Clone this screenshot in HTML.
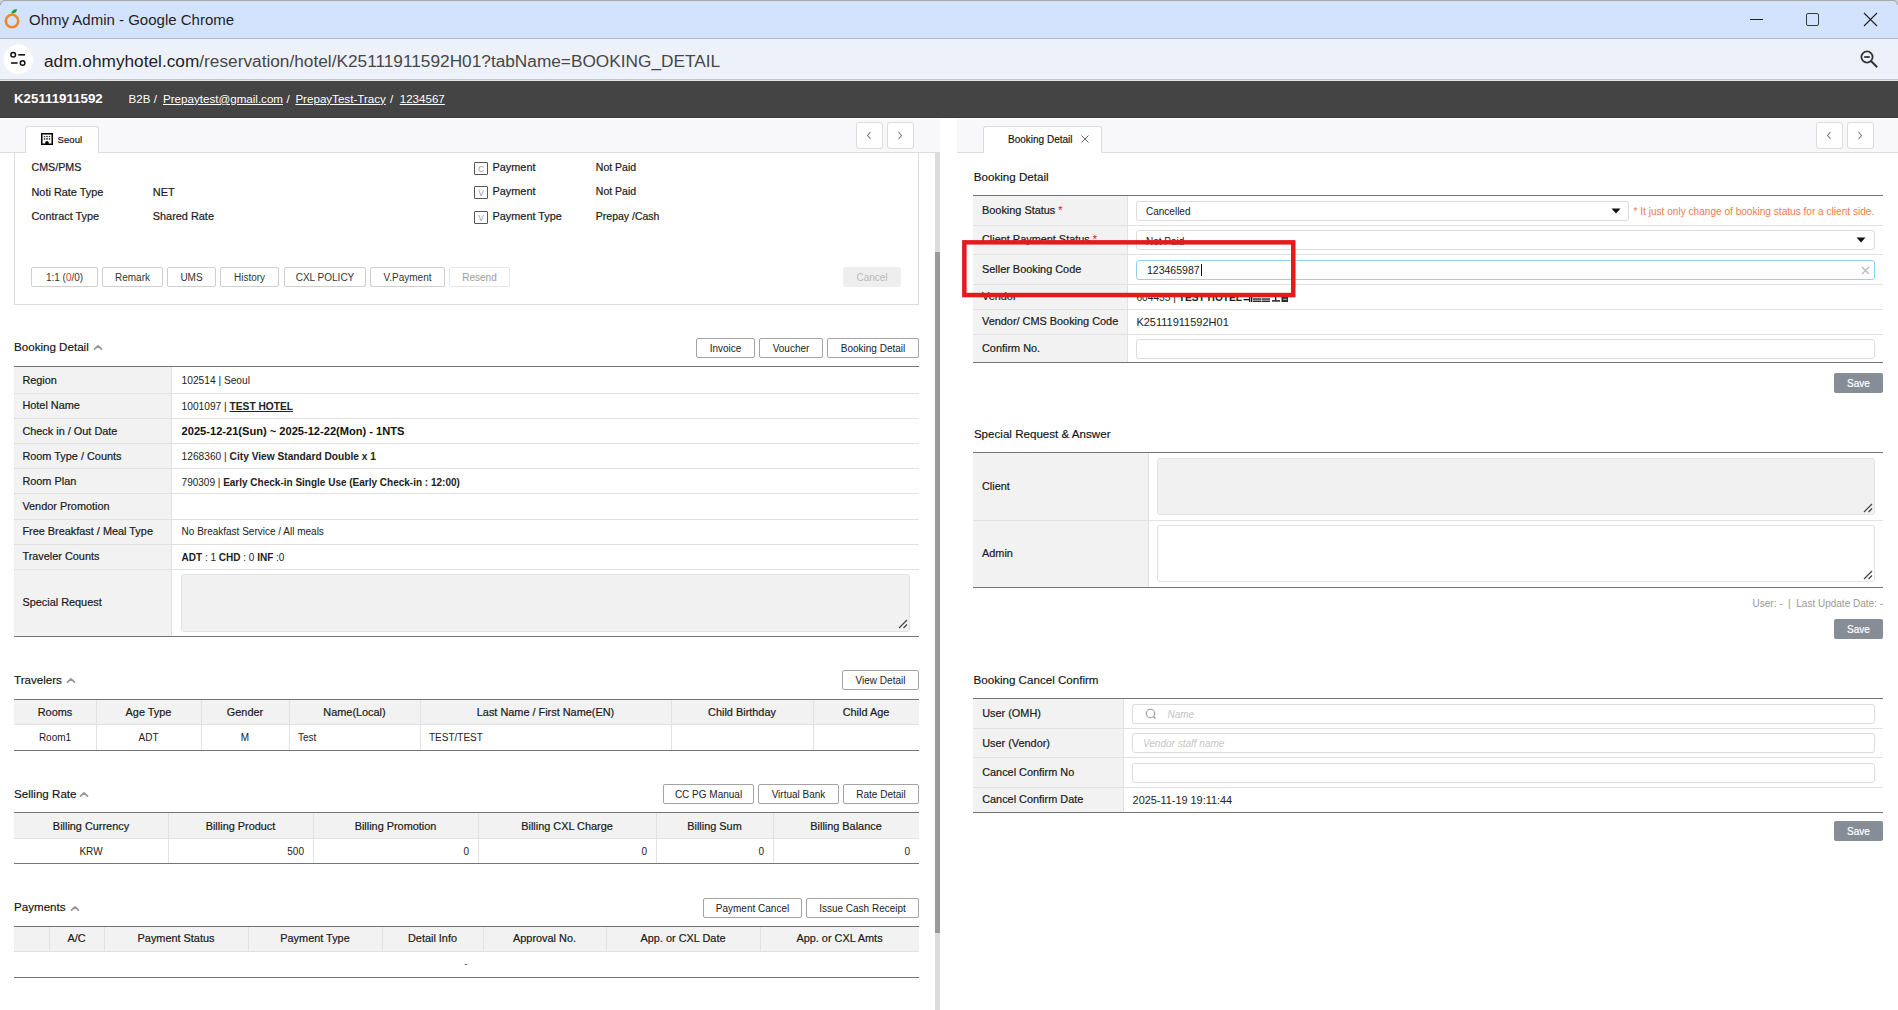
<!DOCTYPE html>
<html><head><meta charset="utf-8"><title>Ohmy Admin</title>
<style>
html,body{margin:0;padding:0;}
body{width:1898px;height:1010px;position:relative;overflow:hidden;background:#fff;font-family:"Liberation Sans",sans-serif;}
.a{position:absolute;}
.t{position:absolute;white-space:nowrap;}
</style></head><body>
<div class="a" style="left:0px;top:0px;width:1898px;height:38px;background:#d3e3fd"></div>
<div class="a" style="left:0px;top:0px;width:1898px;height:1px;background:#a5a7aa"></div>
<svg class="a" style="left:0;top:0" width="5" height="5"><path d="M0 0 H5 V1 C2.5 1 1 2.5 1 5 H0 Z" fill="#d2d4d8"/><path d="M5 0.5 C2.3 0.5 0.5 2.3 0.5 5" fill="none" stroke="#9a9ca0" stroke-width="1"/></svg>
<svg class="a" style="left:1893px;top:0" width="5" height="5"><path d="M5 0 H0 V1 C2.5 1 4 2.5 4 5 H5 Z" fill="#d2d4d8"/><path d="M0 0.5 C2.7 0.5 4.5 2.3 4.5 5" fill="none" stroke="#9a9ca0" stroke-width="1"/></svg>
<div class="a" style="left:0px;top:38px;width:1898px;height:1px;background:#b4b8bf"></div>
<div class="a" style="left:0px;top:39px;width:1898px;height:40px;background:#edf1f9"></div>
<div class="a" style="left:0px;top:79px;width:1898px;height:1px;background:#c3c5c9"></div>
<div class="a" style="left:0px;top:80px;width:1898px;height:1px;background:#e6e6e6"></div>
<svg class="a" style="left:3px;top:7px" width="20" height="22" viewBox="0 0 20 22"><circle cx="9" cy="14" r="6.2" fill="none" stroke="#f0882b" stroke-width="2.6"/><path d="M8.4 6.6 C8.6 3.6 10.8 1.8 14 2.2 C13.8 5.2 11.6 6.8 8.4 6.6 Z" fill="#1a9b3f"/></svg>
<div class="t" style="left:29px;top:12.0px;font-size:15px;line-height:15px;font-weight:400;color:#1f1f1f;">Ohmy Admin - Google Chrome</div>
<div class="a" style="left:1750px;top:19px;width:13px;height:1px;background:#1f1f1f"></div>
<div class="a" style="left:1806px;top:13px;width:13px;height:13px;box-sizing:border-box;border:1.2px solid #3a3a3a;border-radius:2px"></div>
<svg class="a" style="left:1863px;top:12px" width="15" height="15" viewBox="0 0 15 15"><path d="M1 1 L14 14 M14 1 L1 14" stroke="#1f1f1f" stroke-width="1.1"/></svg>
<svg class="a" style="left:2px;top:44px" width="32" height="32" viewBox="0 0 32 32"><circle cx="16.2" cy="15.4" r="14.8" fill="#fff"/><circle cx="11.2" cy="10.8" r="2.3" fill="none" stroke="#111" stroke-width="1.5"/><path d="M16.3 10.8 H23" stroke="#111" stroke-width="1.6"/><circle cx="20.6" cy="19" r="2.3" fill="none" stroke="#111" stroke-width="1.5"/><path d="M9 19 H15.6" stroke="#111" stroke-width="1.6"/></svg>
<div class="t" style="left:44px;top:52.7px;font-size:17.25px;line-height:17.25px;color:#474747"><span style="color:#1f1f1f">adm.ohmyhotel.com</span>/reservation/hotel/K25111911592H01?tabName=BOOKING_DETAIL</div>
<svg class="a" style="left:1858px;top:49px" width="22" height="22" viewBox="0 0 22 22"><circle cx="9" cy="8" r="5.6" fill="none" stroke="#333" stroke-width="1.8"/><path d="M6.2 8 H11.8" stroke="#333" stroke-width="1.8"/><path d="M13 12 L19.2 18.2" stroke="#333" stroke-width="2"/></svg>
<div class="a" style="left:0px;top:81px;width:1898px;height:37px;background:#444"></div>
<div class="a" style="left:0px;top:117px;width:1898px;height:1px;background:#3b3b3b"></div>
<div class="t" style="left:14px;top:92.24px;font-size:13.3px;line-height:13.3px;font-weight:700;color:#fff;">K25111911592</div>
<div class="t" style="left:128.5px;top:92.88px;font-size:11.6px;line-height:11.6px;font-weight:400;color:#fff;">B2B /</div>
<div class="t" style="left:163px;top:92.88px;font-size:11.6px;line-height:11.6px;font-weight:400;color:#fff;text-decoration:underline">Prepaytest@gmail.com</div>
<div class="t" style="left:286.5px;top:92.88px;font-size:11.6px;line-height:11.6px;font-weight:400;color:#fff;">/</div>
<div class="t" style="left:295.4px;top:92.88px;font-size:11.6px;line-height:11.6px;font-weight:400;color:#fff;text-decoration:underline">PrepayTest-Tracy</div>
<div class="t" style="left:390px;top:92.88px;font-size:11.6px;line-height:11.6px;font-weight:400;color:#fff;">/</div>
<div class="t" style="left:399.7px;top:92.88px;font-size:11.6px;line-height:11.6px;font-weight:400;color:#fff;text-decoration:underline">1234567</div>
<div class="a" style="left:0px;top:119px;width:940px;height:34px;background:#f8f7fa"></div>
<div class="a" style="left:0px;top:152px;width:940px;height:1px;background:#dedde0"></div>
<div class="a" style="left:25px;top:126px;width:74px;height:27px;box-sizing:border-box;background:#fff;border:1px solid #dcdcdc;border-bottom:none;border-radius:3px 3px 0 0"></div>
<svg class="a" style="left:41px;top:133px" width="12" height="12" viewBox="0 0 12 12"><rect x="0.75" y="0.75" width="10.5" height="10.5" fill="#fff" stroke="#000" stroke-width="1.5"/><g fill="#333"><rect x="2.8" y="2.9" width="1.4" height="1.3"/><rect x="5.2" y="2.9" width="1.6" height="1.3"/><rect x="7.8" y="2.9" width="1.4" height="1.3"/><rect x="2.8" y="5.1" width="1.4" height="1.6"/><rect x="5.2" y="5.1" width="1.6" height="1.6"/><rect x="7.8" y="5.1" width="1.4" height="1.6"/></g><path d="M4.3 11.5 V9.6 A1.7 1.7 0 0 1 7.7 9.6 V11.5 Z" fill="#000"/></svg>
<div class="t" style="left:57.6px;top:134.67px;font-size:9.6px;line-height:9.6px;font-weight:400;color:#111;-webkit-text-stroke:0.15px #111">Seoul</div>
<div class="a" style="left:856px;top:122px;width:27px;height:27px;box-sizing:border-box;background:#fff;border:1px solid #dcdcdc;border-radius:3px"></div>
<div class="a" style="left:887px;top:122px;width:27px;height:27px;box-sizing:border-box;background:#fff;border:1px solid #dcdcdc;border-radius:3px"></div>
<svg class="a" style="left:865px;top:131px" width="8" height="9" viewBox="0 0 8 9"><path d="M5.5 1 L2.5 4.5 L5.5 8" fill="none" stroke="#777" stroke-width="1.1"/></svg>
<svg class="a" style="left:896px;top:131px" width="8" height="9" viewBox="0 0 8 9"><path d="M2.5 1 L5.5 4.5 L2.5 8" fill="none" stroke="#777" stroke-width="1.1"/></svg>
<div class="a" style="left:14px;top:153px;width:1px;height:152px;background:#dcdcdc"></div>
<div class="a" style="left:918px;top:153px;width:1px;height:152px;background:#dcdcdc"></div>
<div class="a" style="left:14px;top:304px;width:905px;height:1px;background:#dcdcdc"></div>
<div class="t" style="left:31.5px;top:162.44px;font-size:10.7px;line-height:10.7px;font-weight:400;color:#1a1a1a;-webkit-text-stroke:0.2px #1a1a1a;">CMS/PMS</div>
<div class="t" style="left:31.5px;top:187.07px;font-size:10.9px;line-height:10.9px;font-weight:400;color:#1a1a1a;-webkit-text-stroke:0.2px #1a1a1a;">Noti Rate Type</div>
<div class="t" style="left:152.8px;top:187.07px;font-size:10.9px;line-height:10.9px;font-weight:400;color:#1a1a1a;-webkit-text-stroke:0.2px #1a1a1a;">NET</div>
<div class="t" style="left:31.5px;top:211.27px;font-size:10.9px;line-height:10.9px;font-weight:400;color:#1a1a1a;-webkit-text-stroke:0.2px #1a1a1a;">Contract Type</div>
<div class="t" style="left:152.8px;top:211.27px;font-size:10.9px;line-height:10.9px;font-weight:400;color:#1a1a1a;-webkit-text-stroke:0.2px #1a1a1a;">Shared Rate</div>
<div class="a" style="left:474px;top:162px;width:14px;height:13px;box-sizing:border-box;border:1px solid #555;border-radius:1px;background:#fff"></div>
<div class="t" style="left:481px;transform:translateX(-50%);top:164.6px;font-size:8.5px;line-height:8.5px;font-weight:400;color:#999;">C</div>
<div class="t" style="left:492.5px;top:162.17px;font-size:10.9px;line-height:10.9px;font-weight:400;color:#1a1a1a;-webkit-text-stroke:0.2px #1a1a1a;">Payment</div>
<div class="t" style="left:595.8px;top:162.01px;font-size:10.5px;line-height:10.5px;font-weight:400;color:#1a1a1a;-webkit-text-stroke:0.2px #1a1a1a;">Not Paid</div>
<div class="a" style="left:474px;top:186px;width:14px;height:13px;box-sizing:border-box;border:1px solid #555;border-radius:1px;background:#fff"></div>
<div class="t" style="left:481px;transform:translateX(-50%);top:188.6px;font-size:8.5px;line-height:8.5px;font-weight:400;color:#999;">V</div>
<div class="t" style="left:492.5px;top:186.17px;font-size:10.9px;line-height:10.9px;font-weight:400;color:#1a1a1a;-webkit-text-stroke:0.2px #1a1a1a;">Payment</div>
<div class="t" style="left:595.8px;top:186.01px;font-size:10.5px;line-height:10.5px;font-weight:400;color:#1a1a1a;-webkit-text-stroke:0.2px #1a1a1a;">Not Paid</div>
<div class="a" style="left:474px;top:211px;width:14px;height:13px;box-sizing:border-box;border:1px solid #555;border-radius:1px;background:#fff"></div>
<div class="t" style="left:481px;transform:translateX(-50%);top:213.6px;font-size:8.5px;line-height:8.5px;font-weight:400;color:#999;">V</div>
<div class="t" style="left:492.5px;top:211.17px;font-size:10.9px;line-height:10.9px;font-weight:400;color:#1a1a1a;-webkit-text-stroke:0.2px #1a1a1a;">Payment Type</div>
<div class="t" style="left:595.8px;top:211.01px;font-size:10.5px;line-height:10.5px;font-weight:400;color:#1a1a1a;-webkit-text-stroke:0.2px #1a1a1a;">Prepay /Cash</div>
<div class="a" style="left:31px;top:267px;width:67px;height:20px;box-sizing:border-box;border:1px solid #cfcfcf;border-radius:2px;background:#fff"></div>
<div class="t" style="left:64.5px;transform:translateX(-50%);top:273.04px;font-size:10px;line-height:10px;font-weight:400;color:#333;">1:1 (<span style="color:#e8322e">0</span>/0)</div>
<div class="a" style="left:102px;top:267px;width:61px;height:20px;box-sizing:border-box;border:1px solid #cfcfcf;border-radius:2px;background:#fff"></div>
<div class="t" style="left:132.5px;transform:translateX(-50%);top:273.04px;font-size:10px;line-height:10px;font-weight:400;color:#333;">Remark</div>
<div class="a" style="left:167px;top:267px;width:49px;height:20px;box-sizing:border-box;border:1px solid #cfcfcf;border-radius:2px;background:#fff"></div>
<div class="t" style="left:191.5px;transform:translateX(-50%);top:273.04px;font-size:10px;line-height:10px;font-weight:400;color:#333;">UMS</div>
<div class="a" style="left:220px;top:267px;width:59px;height:20px;box-sizing:border-box;border:1px solid #cfcfcf;border-radius:2px;background:#fff"></div>
<div class="t" style="left:249.5px;transform:translateX(-50%);top:273.04px;font-size:10px;line-height:10px;font-weight:400;color:#333;">History</div>
<div class="a" style="left:284px;top:267px;width:82px;height:20px;box-sizing:border-box;border:1px solid #cfcfcf;border-radius:2px;background:#fff"></div>
<div class="t" style="left:325.0px;transform:translateX(-50%);top:273.04px;font-size:10px;line-height:10px;font-weight:400;color:#333;">CXL POLICY</div>
<div class="a" style="left:370px;top:267px;width:75px;height:20px;box-sizing:border-box;border:1px solid #cfcfcf;border-radius:2px;background:#fff"></div>
<div class="t" style="left:407.5px;transform:translateX(-50%);top:273.04px;font-size:10px;line-height:10px;font-weight:400;color:#333;">V.Payment</div>
<div class="a" style="left:449px;top:267px;width:61px;height:20px;box-sizing:border-box;border:1px solid #e6e6e6;border-radius:2px;background:#fff"></div>
<div class="t" style="left:479.5px;transform:translateX(-50%);top:273.04px;font-size:10px;line-height:10px;font-weight:400;color:#9a9a9a;">Resend</div>
<div class="a" style="left:843px;top:267px;width:58px;height:20px;background:#eeeeee;border-radius:2px"></div>
<div class="t" style="left:872px;transform:translateX(-50%);top:273.04px;font-size:10px;line-height:10px;font-weight:400;color:#b9b9b9;">Cancel</div>
<div class="a" style="left:935px;top:153px;width:5px;height:857px;background:#dcdcdc"></div>
<div class="a" style="left:935px;top:252px;width:5px;height:681px;background:#999"></div>
<div class="t" style="left:14px;top:340.88px;font-size:11.6px;line-height:11.6px;font-weight:400;color:#111;-webkit-text-stroke:0.15px #111">Booking Detail</div>
<svg class="a" style="left:93px;top:344px" width="10" height="7" viewBox="0 0 10 7"><path d="M1.5 5.2 L5 1.8 L8.5 5.2" fill="none" stroke="#959595" stroke-width="1.7" stroke-linecap="round" stroke-linejoin="round"/></svg>
<div class="a" style="left:696px;top:338px;width:59px;height:20px;box-sizing:border-box;border:1px solid #a3a3a3;border-radius:2px;background:#fff"></div>
<div class="t" style="left:725.5px;transform:translateX(-50%);top:344.24px;font-size:10px;line-height:10px;font-weight:400;color:#222;">Invoice</div>
<div class="a" style="left:759px;top:338px;width:64px;height:20px;box-sizing:border-box;border:1px solid #a3a3a3;border-radius:2px;background:#fff"></div>
<div class="t" style="left:791.0px;transform:translateX(-50%);top:344.24px;font-size:10px;line-height:10px;font-weight:400;color:#222;">Voucher</div>
<div class="a" style="left:827px;top:338px;width:92px;height:20px;box-sizing:border-box;border:1px solid #a3a3a3;border-radius:2px;background:#fff"></div>
<div class="t" style="left:873.0px;transform:translateX(-50%);top:344.24px;font-size:10px;line-height:10px;font-weight:400;color:#222;">Booking Detail</div>
<div class="a" style="left:14px;top:366px;width:905px;height:1px;background:#747474"></div>
<div class="a" style="left:14px;top:367px;width:157px;height:269px;background:#f2f2f2"></div>
<div class="a" style="left:171px;top:367px;width:1px;height:269px;background:#e1e1e1"></div>
<div class="a" style="left:14px;top:393px;width:905px;height:1px;background:#e1e1e1"></div>
<div class="a" style="left:14px;top:418px;width:905px;height:1px;background:#e1e1e1"></div>
<div class="a" style="left:14px;top:443px;width:905px;height:1px;background:#e1e1e1"></div>
<div class="a" style="left:14px;top:468px;width:905px;height:1px;background:#e1e1e1"></div>
<div class="a" style="left:14px;top:493px;width:905px;height:1px;background:#e1e1e1"></div>
<div class="a" style="left:14px;top:519px;width:905px;height:1px;background:#e1e1e1"></div>
<div class="a" style="left:14px;top:544px;width:905px;height:1px;background:#e1e1e1"></div>
<div class="a" style="left:14px;top:569px;width:905px;height:1px;background:#e1e1e1"></div>
<div class="a" style="left:14px;top:636px;width:905px;height:1px;background:#747474"></div>
<div class="t" style="left:22.4px;top:374.77px;font-size:10.9px;line-height:10.9px;font-weight:400;color:#1a1a1a;-webkit-text-stroke:0.2px #1a1a1a;">Region</div>
<div class="t" style="left:22.4px;top:400.27px;font-size:10.9px;line-height:10.9px;font-weight:400;color:#1a1a1a;-webkit-text-stroke:0.2px #1a1a1a;">Hotel Name</div>
<div class="t" style="left:22.4px;top:425.57px;font-size:10.9px;line-height:10.9px;font-weight:400;color:#1a1a1a;-webkit-text-stroke:0.2px #1a1a1a;">Check in / Out Date</div>
<div class="t" style="left:22.4px;top:450.77px;font-size:10.9px;line-height:10.9px;font-weight:400;color:#1a1a1a;-webkit-text-stroke:0.2px #1a1a1a;">Room Type / Counts</div>
<div class="t" style="left:22.4px;top:475.97px;font-size:10.9px;line-height:10.9px;font-weight:400;color:#1a1a1a;-webkit-text-stroke:0.2px #1a1a1a;">Room Plan</div>
<div class="t" style="left:22.4px;top:501.27px;font-size:10.9px;line-height:10.9px;font-weight:400;color:#1a1a1a;-webkit-text-stroke:0.2px #1a1a1a;">Vendor Promotion</div>
<div class="t" style="left:22.4px;top:526.47px;font-size:10.9px;line-height:10.9px;font-weight:400;color:#1a1a1a;-webkit-text-stroke:0.2px #1a1a1a;">Free Breakfast / Meal Type</div>
<div class="t" style="left:22.4px;top:551.27px;font-size:10.9px;line-height:10.9px;font-weight:400;color:#1a1a1a;-webkit-text-stroke:0.2px #1a1a1a;">Traveler Counts</div>
<div class="t" style="left:22.4px;top:596.87px;font-size:10.9px;line-height:10.9px;font-weight:400;color:#1a1a1a;-webkit-text-stroke:0.2px #1a1a1a;">Special Request</div>
<div class="t" style="left:181.6px;top:376.17px;font-size:10.2px;line-height:10.2px;font-weight:400;color:#222;">102514 | Seoul</div>
<div class="t" style="left:181.6px;top:401.67px;font-size:10.2px;line-height:10.2px;font-weight:400;color:#222;">1001097 | <b style="text-decoration:underline">TEST HOTEL</b></div>
<div class="t" style="left:181.6px;top:426.1px;font-size:11.1px;line-height:11.1px;font-weight:700;color:#111;">2025-12-21(Sun) ~ 2025-12-22(Mon) - 1NTS</div>
<div class="t" style="left:181.6px;top:452.27px;font-size:10.2px;line-height:10.2px;font-weight:400;color:#222;">1268360 | <b>City View Standard Double x 1</b></div>
<div class="t" style="left:181.6px;top:477.74px;font-size:10px;line-height:10px;font-weight:400;color:#222;">790309 | <b>Early Check-in Single Use (Early Check-in : 12:00)</b></div>
<div class="t" style="left:181.6px;top:527.33px;font-size:10px;line-height:10px;font-weight:400;color:#222;">No Breakfast Service / All meals</div>
<div class="t" style="left:181.6px;top:552.63px;font-size:10px;line-height:10px;font-weight:400;color:#222;"><b>ADT</b> : 1 <b>CHD</b> : 0 <b>INF</b> :0</div>
<div class="a" style="left:181px;top:574px;width:729px;height:58px;box-sizing:border-box;background:#f1f1f1;border:1px solid #e3e3e3;border-radius:3px"></div>
<svg class="a" style="left:898px;top:619px" width="10" height="10" viewBox="0 0 10 10"><path d="M1 9 L9 1 M5.5 9 L9 5.5" stroke="#444" stroke-width="1.2"/></svg>
<div class="t" style="left:14px;top:673.88px;font-size:11.6px;line-height:11.6px;font-weight:400;color:#111;-webkit-text-stroke:0.15px #111">Travelers</div>
<svg class="a" style="left:66px;top:677px" width="10" height="7" viewBox="0 0 10 7"><path d="M1.5 5.2 L5 1.8 L8.5 5.2" fill="none" stroke="#959595" stroke-width="1.7" stroke-linecap="round" stroke-linejoin="round"/></svg>
<div class="a" style="left:842px;top:670px;width:77px;height:20px;box-sizing:border-box;border:1px solid #a3a3a3;border-radius:2px;background:#fff"></div>
<div class="t" style="left:880.5px;transform:translateX(-50%);top:676.24px;font-size:10px;line-height:10px;font-weight:400;color:#222;">View Detail</div>
<div class="a" style="left:14px;top:699px;width:905px;height:1px;background:#747474"></div>
<div class="a" style="left:14px;top:700px;width:905px;height:24px;background:#f2f2f2"></div>
<div class="a" style="left:14px;top:724px;width:905px;height:1px;background:#e1e1e1"></div>
<div class="a" style="left:96px;top:700px;width:1px;height:50px;background:#e1e1e1"></div>
<div class="a" style="left:201px;top:700px;width:1px;height:50px;background:#e1e1e1"></div>
<div class="a" style="left:289px;top:700px;width:1px;height:50px;background:#e1e1e1"></div>
<div class="a" style="left:420px;top:700px;width:1px;height:50px;background:#e1e1e1"></div>
<div class="a" style="left:671px;top:700px;width:1px;height:50px;background:#e1e1e1"></div>
<div class="a" style="left:813px;top:700px;width:1px;height:50px;background:#e1e1e1"></div>
<div class="a" style="left:14px;top:750px;width:905px;height:1px;background:#747474"></div>
<div class="t" style="left:55.0px;transform:translateX(-50%);top:706.57px;font-size:10.9px;line-height:10.9px;font-weight:400;color:#1a1a1a;-webkit-text-stroke:0.2px #1a1a1a;">Rooms</div>
<div class="t" style="left:148.5px;transform:translateX(-50%);top:706.57px;font-size:10.9px;line-height:10.9px;font-weight:400;color:#1a1a1a;-webkit-text-stroke:0.2px #1a1a1a;">Age Type</div>
<div class="t" style="left:245.0px;transform:translateX(-50%);top:706.57px;font-size:10.9px;line-height:10.9px;font-weight:400;color:#1a1a1a;-webkit-text-stroke:0.2px #1a1a1a;">Gender</div>
<div class="t" style="left:354.5px;transform:translateX(-50%);top:706.57px;font-size:10.9px;line-height:10.9px;font-weight:400;color:#1a1a1a;-webkit-text-stroke:0.2px #1a1a1a;">Name(Local)</div>
<div class="t" style="left:545.5px;transform:translateX(-50%);top:706.57px;font-size:10.9px;line-height:10.9px;font-weight:400;color:#1a1a1a;-webkit-text-stroke:0.2px #1a1a1a;">Last Name / First Name(EN)</div>
<div class="t" style="left:742.0px;transform:translateX(-50%);top:706.57px;font-size:10.9px;line-height:10.9px;font-weight:400;color:#1a1a1a;-webkit-text-stroke:0.2px #1a1a1a;">Child Birthday</div>
<div class="t" style="left:866.0px;transform:translateX(-50%);top:706.57px;font-size:10.9px;line-height:10.9px;font-weight:400;color:#1a1a1a;-webkit-text-stroke:0.2px #1a1a1a;">Child Age</div>
<div class="t" style="left:55.0px;transform:translateX(-50%);top:733.24px;font-size:10px;line-height:10px;font-weight:400;color:#222;">Room1</div>
<div class="t" style="left:148.5px;transform:translateX(-50%);top:733.24px;font-size:10px;line-height:10px;font-weight:400;color:#222;">ADT</div>
<div class="t" style="left:245.0px;transform:translateX(-50%);top:733.24px;font-size:10px;line-height:10px;font-weight:400;color:#222;">M</div>
<div class="t" style="left:298px;top:733.24px;font-size:10px;line-height:10px;font-weight:400;color:#222;">Test</div>
<div class="t" style="left:429px;top:733.24px;font-size:10px;line-height:10px;font-weight:400;color:#222;">TEST/TEST</div>
<div class="t" style="left:14px;top:787.68px;font-size:11.6px;line-height:11.6px;font-weight:400;color:#111;-webkit-text-stroke:0.15px #111">Selling Rate</div>
<svg class="a" style="left:79px;top:791px" width="10" height="7" viewBox="0 0 10 7"><path d="M1.5 5.2 L5 1.8 L8.5 5.2" fill="none" stroke="#959595" stroke-width="1.7" stroke-linecap="round" stroke-linejoin="round"/></svg>
<div class="a" style="left:663px;top:784px;width:91px;height:20px;box-sizing:border-box;border:1px solid #a3a3a3;border-radius:2px;background:#fff"></div>
<div class="t" style="left:708.5px;transform:translateX(-50%);top:790.24px;font-size:10px;line-height:10px;font-weight:400;color:#222;">CC PG Manual</div>
<div class="a" style="left:758px;top:784px;width:81px;height:20px;box-sizing:border-box;border:1px solid #a3a3a3;border-radius:2px;background:#fff"></div>
<div class="t" style="left:798.5px;transform:translateX(-50%);top:790.24px;font-size:10px;line-height:10px;font-weight:400;color:#222;">Virtual Bank</div>
<div class="a" style="left:843px;top:784px;width:76px;height:20px;box-sizing:border-box;border:1px solid #a3a3a3;border-radius:2px;background:#fff"></div>
<div class="t" style="left:881.0px;transform:translateX(-50%);top:790.24px;font-size:10px;line-height:10px;font-weight:400;color:#222;">Rate Detail</div>
<div class="a" style="left:14px;top:812px;width:905px;height:1px;background:#747474"></div>
<div class="a" style="left:14px;top:813px;width:905px;height:25px;background:#f2f2f2"></div>
<div class="a" style="left:14px;top:838px;width:905px;height:1px;background:#e1e1e1"></div>
<div class="a" style="left:168px;top:813px;width:1px;height:50px;background:#e1e1e1"></div>
<div class="a" style="left:313px;top:813px;width:1px;height:50px;background:#e1e1e1"></div>
<div class="a" style="left:478px;top:813px;width:1px;height:50px;background:#e1e1e1"></div>
<div class="a" style="left:656px;top:813px;width:1px;height:50px;background:#e1e1e1"></div>
<div class="a" style="left:773px;top:813px;width:1px;height:50px;background:#e1e1e1"></div>
<div class="a" style="left:14px;top:863px;width:905px;height:1px;background:#747474"></div>
<div class="t" style="left:91.0px;transform:translateX(-50%);top:820.67px;font-size:10.9px;line-height:10.9px;font-weight:400;color:#1a1a1a;-webkit-text-stroke:0.2px #1a1a1a;">Billing Currency</div>
<div class="t" style="left:240.5px;transform:translateX(-50%);top:820.67px;font-size:10.9px;line-height:10.9px;font-weight:400;color:#1a1a1a;-webkit-text-stroke:0.2px #1a1a1a;">Billing Product</div>
<div class="t" style="left:395.5px;transform:translateX(-50%);top:820.67px;font-size:10.9px;line-height:10.9px;font-weight:400;color:#1a1a1a;-webkit-text-stroke:0.2px #1a1a1a;">Billing Promotion</div>
<div class="t" style="left:567.0px;transform:translateX(-50%);top:820.67px;font-size:10.9px;line-height:10.9px;font-weight:400;color:#1a1a1a;-webkit-text-stroke:0.2px #1a1a1a;">Billing CXL Charge</div>
<div class="t" style="left:714.5px;transform:translateX(-50%);top:820.67px;font-size:10.9px;line-height:10.9px;font-weight:400;color:#1a1a1a;-webkit-text-stroke:0.2px #1a1a1a;">Billing Sum</div>
<div class="t" style="left:846.0px;transform:translateX(-50%);top:820.67px;font-size:10.9px;line-height:10.9px;font-weight:400;color:#1a1a1a;-webkit-text-stroke:0.2px #1a1a1a;">Billing Balance</div>
<div class="t" style="left:91.0px;transform:translateX(-50%);top:847.43px;font-size:10px;line-height:10px;font-weight:400;color:#222;">KRW</div>
<div class="t" style="right:1594px;top:847.43px;font-size:10px;line-height:10px;font-weight:400;color:#222;">500</div>
<div class="t" style="right:1429px;top:847.43px;font-size:10px;line-height:10px;font-weight:400;color:#222;">0</div>
<div class="t" style="right:1251px;top:847.43px;font-size:10px;line-height:10px;font-weight:400;color:#222;">0</div>
<div class="t" style="right:1134px;top:847.43px;font-size:10px;line-height:10px;font-weight:400;color:#222;">0</div>
<div class="t" style="right:988px;top:847.43px;font-size:10px;line-height:10px;font-weight:400;color:#222;">0</div>
<div class="t" style="left:14px;top:901.38px;font-size:11.6px;line-height:11.6px;font-weight:400;color:#111;-webkit-text-stroke:0.15px #111">Payments</div>
<svg class="a" style="left:70px;top:905px" width="10" height="7" viewBox="0 0 10 7"><path d="M1.5 5.2 L5 1.8 L8.5 5.2" fill="none" stroke="#959595" stroke-width="1.7" stroke-linecap="round" stroke-linejoin="round"/></svg>
<div class="a" style="left:703px;top:898px;width:99px;height:20px;box-sizing:border-box;border:1px solid #a3a3a3;border-radius:2px;background:#fff"></div>
<div class="t" style="left:752.5px;transform:translateX(-50%);top:904.24px;font-size:10px;line-height:10px;font-weight:400;color:#222;">Payment Cancel</div>
<div class="a" style="left:806px;top:898px;width:113px;height:20px;box-sizing:border-box;border:1px solid #a3a3a3;border-radius:2px;background:#fff"></div>
<div class="t" style="left:862.5px;transform:translateX(-50%);top:904.24px;font-size:10px;line-height:10px;font-weight:400;color:#222;">Issue Cash Receipt</div>
<div class="a" style="left:14px;top:926px;width:905px;height:1px;background:#747474"></div>
<div class="a" style="left:14px;top:927px;width:905px;height:24px;background:#f2f2f2"></div>
<div class="a" style="left:14px;top:951px;width:905px;height:1px;background:#e1e1e1"></div>
<div class="a" style="left:49px;top:927px;width:1px;height:24px;background:#e1e1e1"></div>
<div class="a" style="left:104px;top:927px;width:1px;height:24px;background:#e1e1e1"></div>
<div class="a" style="left:248px;top:927px;width:1px;height:24px;background:#e1e1e1"></div>
<div class="a" style="left:382px;top:927px;width:1px;height:24px;background:#e1e1e1"></div>
<div class="a" style="left:483px;top:927px;width:1px;height:24px;background:#e1e1e1"></div>
<div class="a" style="left:606px;top:927px;width:1px;height:24px;background:#e1e1e1"></div>
<div class="a" style="left:760px;top:927px;width:1px;height:24px;background:#e1e1e1"></div>
<div class="a" style="left:14px;top:977px;width:905px;height:1px;background:#747474"></div>
<div class="t" style="left:31.5px;transform:translateX(-50%);top:933.27px;font-size:10.9px;line-height:10.9px;font-weight:400;color:#1a1a1a;-webkit-text-stroke:0.2px #1a1a1a;"></div>
<div class="t" style="left:76.5px;transform:translateX(-50%);top:933.27px;font-size:10.9px;line-height:10.9px;font-weight:400;color:#1a1a1a;-webkit-text-stroke:0.2px #1a1a1a;">A/C</div>
<div class="t" style="left:176.0px;transform:translateX(-50%);top:933.27px;font-size:10.9px;line-height:10.9px;font-weight:400;color:#1a1a1a;-webkit-text-stroke:0.2px #1a1a1a;">Payment Status</div>
<div class="t" style="left:315.0px;transform:translateX(-50%);top:933.27px;font-size:10.9px;line-height:10.9px;font-weight:400;color:#1a1a1a;-webkit-text-stroke:0.2px #1a1a1a;">Payment Type</div>
<div class="t" style="left:432.5px;transform:translateX(-50%);top:933.27px;font-size:10.9px;line-height:10.9px;font-weight:400;color:#1a1a1a;-webkit-text-stroke:0.2px #1a1a1a;">Detail Info</div>
<div class="t" style="left:544.5px;transform:translateX(-50%);top:933.27px;font-size:10.9px;line-height:10.9px;font-weight:400;color:#1a1a1a;-webkit-text-stroke:0.2px #1a1a1a;">Approval No.</div>
<div class="t" style="left:683.0px;transform:translateX(-50%);top:933.27px;font-size:10.9px;line-height:10.9px;font-weight:400;color:#1a1a1a;-webkit-text-stroke:0.2px #1a1a1a;">App. or CXL Date</div>
<div class="t" style="left:839.5px;transform:translateX(-50%);top:933.27px;font-size:10.9px;line-height:10.9px;font-weight:400;color:#1a1a1a;-webkit-text-stroke:0.2px #1a1a1a;">App. or CXL Amts</div>
<div class="t" style="left:466px;transform:translateX(-50%);top:959.03px;font-size:10px;line-height:10px;font-weight:400;color:#555;">-</div>
<div class="a" style="left:957px;top:119px;width:941px;height:34px;background:#f8f7fa"></div>
<div class="a" style="left:957px;top:152px;width:941px;height:1px;background:#dedde0"></div>
<div class="a" style="left:983px;top:126px;width:119px;height:27px;box-sizing:border-box;background:#fff;border:1px solid #dcdcdc;border-bottom:none;border-radius:3px 3px 0 0"></div>
<div class="t" style="left:1008px;top:135.34px;font-size:10px;line-height:10px;font-weight:400;color:#111;-webkit-text-stroke:0.15px #111">Booking Detail</div>
<svg class="a" style="left:1080px;top:134px" width="10" height="10" viewBox="0 0 10 10"><path d="M1.5 1.5 L8.5 8.5 M8.5 1.5 L1.5 8.5" stroke="#666" stroke-width="1"/></svg>
<div class="a" style="left:1816px;top:122px;width:27px;height:27px;box-sizing:border-box;background:#fff;border:1px solid #dcdcdc;border-radius:3px"></div>
<div class="a" style="left:1847px;top:122px;width:27px;height:27px;box-sizing:border-box;background:#fff;border:1px solid #dcdcdc;border-radius:3px"></div>
<svg class="a" style="left:1825px;top:131px" width="8" height="9" viewBox="0 0 8 9"><path d="M5.5 1 L2.5 4.5 L5.5 8" fill="none" stroke="#777" stroke-width="1.1"/></svg>
<svg class="a" style="left:1856px;top:131px" width="8" height="9" viewBox="0 0 8 9"><path d="M2.5 1 L5.5 4.5 L2.5 8" fill="none" stroke="#777" stroke-width="1.1"/></svg>
<div class="t" style="left:973.8px;top:170.88px;font-size:11.6px;line-height:11.6px;font-weight:400;color:#111;-webkit-text-stroke:0.15px #111">Booking Detail</div>
<div class="a" style="left:973px;top:195px;width:910px;height:1px;background:#747474"></div>
<div class="a" style="left:973px;top:196px;width:154px;height:166px;background:#f2f2f2"></div>
<div class="a" style="left:1127px;top:196px;width:1px;height:166px;background:#e1e1e1"></div>
<div class="a" style="left:973px;top:225px;width:910px;height:1px;background:#e1e1e1"></div>
<div class="a" style="left:973px;top:254px;width:910px;height:1px;background:#e1e1e1"></div>
<div class="a" style="left:973px;top:284px;width:910px;height:1px;background:#e1e1e1"></div>
<div class="a" style="left:973px;top:309px;width:910px;height:1px;background:#e1e1e1"></div>
<div class="a" style="left:973px;top:334px;width:910px;height:1px;background:#e1e1e1"></div>
<div class="a" style="left:973px;top:362px;width:910px;height:1px;background:#747474"></div>
<div class="t" style="left:982px;top:205.27px;font-size:10.9px;line-height:10.9px;font-weight:400;color:#1a1a1a;-webkit-text-stroke:0.2px #1a1a1a;">Booking Status <span style="color:#f0202a;-webkit-text-stroke:0.1px #f0202a">*</span></div>
<div class="t" style="left:982px;top:233.77px;font-size:10.9px;line-height:10.9px;font-weight:400;color:#1a1a1a;-webkit-text-stroke:0.2px #1a1a1a;">Client Payment Status <span style="color:#f0202a;-webkit-text-stroke:0.1px #f0202a">*</span></div>
<div class="t" style="left:982px;top:264.27px;font-size:10.9px;line-height:10.9px;font-weight:400;color:#1a1a1a;-webkit-text-stroke:0.2px #1a1a1a;">Seller Booking Code</div>
<div class="t" style="left:982px;top:291.27px;font-size:10.9px;line-height:10.9px;font-weight:400;color:#1a1a1a;-webkit-text-stroke:0.2px #1a1a1a;">Vendor</div>
<div class="t" style="left:982px;top:316.27px;font-size:10.9px;line-height:10.9px;font-weight:400;color:#1a1a1a;-webkit-text-stroke:0.2px #1a1a1a;">Vendor/ CMS Booking Code</div>
<div class="t" style="left:982px;top:343.07px;font-size:10.9px;line-height:10.9px;font-weight:400;color:#1a1a1a;-webkit-text-stroke:0.2px #1a1a1a;">Confirm No.</div>
<div class="a" style="left:1136px;top:201px;width:493px;height:20px;box-sizing:border-box;border:1px solid #dcdcdc;border-radius:3px;background:#fff"></div>
<div class="t" style="left:1146px;top:206.94px;font-size:10px;line-height:10px;font-weight:400;color:#222;">Cancelled</div>
<svg class="a" style="left:1610.5px;top:207.5px" width="10" height="6" viewBox="0 0 10 6"><path d="M0.5 0.5 H9.5 L5 5.5 Z" fill="#111"/></svg>
<div class="t" style="left:1633.5px;top:207.05px;font-size:10.1px;line-height:10.1px;font-weight:400;color:#f47a4c;"><span>*</span> It just only change of booking status for a client side.</div>
<div class="a" style="left:1136px;top:230px;width:739px;height:20px;box-sizing:border-box;border:1px solid #dcdcdc;border-radius:3px;background:#fff"></div>
<div class="t" style="left:1146px;top:237.34px;font-size:10px;line-height:10px;font-weight:400;color:#222;">Not Paid</div>
<svg class="a" style="left:1856px;top:237px" width="10" height="6" viewBox="0 0 10 6"><path d="M0.5 0.5 H9.5 L5 5.5 Z" fill="#111"/></svg>
<div class="a" style="left:1136px;top:260px;width:739px;height:20px;box-sizing:border-box;border:1px solid #92d2ee;border-radius:3px;background:#fff"></div>
<div class="t" style="left:1147px;top:265.41px;font-size:10.5px;line-height:10.5px;font-weight:400;color:#222;">123465987</div>
<div class="a" style="left:1201px;top:264px;width:1px;height:12px;background:#111"></div>
<svg class="a" style="left:1861px;top:266px" width="9" height="9" viewBox="0 0 9 9"><path d="M1 1 L8 8 M8 1 L1 8" stroke="#bdbdbd" stroke-width="1.5"/></svg>
<div class="t" style="left:1136.4px;top:293.37px;font-size:10.2px;line-height:10.2px;font-weight:400;color:#222;">604455 | <b>TEST HOTEL</b></div>
<svg class="a" style="left:1240px;top:292px" width="60" height="12"><g fill="#111"><rect x="3.5" y="7" width="5.5" height="1.3"/><rect x="9" y="4" width="1.3" height="6"/><rect x="11" y="4" width="1.3" height="6"/><rect x="13" y="6.4" width="8.5" height="1.3"/><rect x="13" y="8.6" width="8.5" height="1.3"/><rect x="22" y="6.4" width="8" height="1.3"/><rect x="22" y="8.6" width="8" height="1.3"/><rect x="35" y="5" width="1.3" height="3"/><rect x="32" y="8.2" width="8" height="1.4"/><rect x="41.5" y="5" width="6.5" height="5" fill="#2a2a2a"/><rect x="43" y="6.8" width="4" height="1" fill="#bbb"/></g></svg>
<div class="t" style="left:1136.4px;top:316.69px;font-size:11px;line-height:11px;font-weight:400;color:#222;">K25111911592H01</div>
<div class="a" style="left:1136px;top:339px;width:739px;height:20px;box-sizing:border-box;border:1px solid #dcdcdc;border-radius:3px;background:#fff"></div>
<div class="a" style="left:1834px;top:373px;width:49px;height:20px;background:#868d96;border-radius:2px"></div>
<div class="t" style="left:1858.5px;transform:translateX(-50%);top:379.04px;font-size:10px;line-height:10px;font-weight:400;color:#fff;-webkit-text-stroke:0.2px #fff">Save</div>
<div class="t" style="left:973.9px;top:427.68px;font-size:11.6px;line-height:11.6px;font-weight:400;color:#111;-webkit-text-stroke:0.15px #111">Special Request &amp; Answer</div>
<div class="a" style="left:973px;top:452px;width:910px;height:1px;background:#747474"></div>
<div class="a" style="left:973px;top:453px;width:175px;height:134px;background:#f2f2f2"></div>
<div class="a" style="left:1148px;top:453px;width:1px;height:134px;background:#e1e1e1"></div>
<div class="a" style="left:973px;top:520px;width:910px;height:1px;background:#e1e1e1"></div>
<div class="a" style="left:973px;top:587px;width:910px;height:1px;background:#747474"></div>
<div class="t" style="left:982px;top:481.17px;font-size:10.9px;line-height:10.9px;font-weight:400;color:#1a1a1a;-webkit-text-stroke:0.2px #1a1a1a;">Client</div>
<div class="t" style="left:982px;top:547.97px;font-size:10.9px;line-height:10.9px;font-weight:400;color:#1a1a1a;-webkit-text-stroke:0.2px #1a1a1a;">Admin</div>
<div class="a" style="left:1157px;top:458px;width:718px;height:57px;box-sizing:border-box;background:#f1f1f1;border:1px solid #e3e3e3;border-radius:3px"></div>
<div class="a" style="left:1157px;top:525px;width:718px;height:57px;box-sizing:border-box;background:#fff;border:1px solid #e3e3e3;border-radius:3px"></div>
<svg class="a" style="left:1863px;top:503px" width="10" height="10" viewBox="0 0 10 10"><path d="M1 9 L9 1 M5.5 9 L9 5.5" stroke="#444" stroke-width="1.2"/></svg>
<svg class="a" style="left:1863px;top:570px" width="10" height="10" viewBox="0 0 10 10"><path d="M1 9 L9 1 M5.5 9 L9 5.5" stroke="#444" stroke-width="1.2"/></svg>
<div class="t" style="right:15px;top:599.03px;font-size:10px;line-height:10px;font-weight:400;color:#999;">User: - &nbsp;|&nbsp; Last Update Date: -</div>
<div class="a" style="left:1834px;top:619px;width:49px;height:20px;background:#868d96;border-radius:2px"></div>
<div class="t" style="left:1858.5px;transform:translateX(-50%);top:625.03px;font-size:10px;line-height:10px;font-weight:400;color:#fff;-webkit-text-stroke:0.2px #fff">Save</div>
<div class="t" style="left:973.5px;top:674.08px;font-size:11.6px;line-height:11.6px;font-weight:400;color:#111;-webkit-text-stroke:0.15px #111">Booking Cancel Confirm</div>
<div class="a" style="left:973px;top:698px;width:910px;height:1px;background:#747474"></div>
<div class="a" style="left:973px;top:699px;width:150px;height:113px;background:#f2f2f2"></div>
<div class="a" style="left:1123px;top:699px;width:1px;height:113px;background:#e1e1e1"></div>
<div class="a" style="left:973px;top:728px;width:910px;height:1px;background:#e1e1e1"></div>
<div class="a" style="left:973px;top:757px;width:910px;height:1px;background:#e1e1e1"></div>
<div class="a" style="left:973px;top:787px;width:910px;height:1px;background:#e1e1e1"></div>
<div class="a" style="left:973px;top:812px;width:910px;height:1px;background:#747474"></div>
<div class="t" style="left:982.2px;top:708.47px;font-size:10.9px;line-height:10.9px;font-weight:400;color:#1a1a1a;-webkit-text-stroke:0.2px #1a1a1a;">User (OMH)</div>
<div class="t" style="left:982.2px;top:737.57px;font-size:10.9px;line-height:10.9px;font-weight:400;color:#1a1a1a;-webkit-text-stroke:0.2px #1a1a1a;">User (Vendor)</div>
<div class="t" style="left:982.2px;top:767.07px;font-size:10.9px;line-height:10.9px;font-weight:400;color:#1a1a1a;-webkit-text-stroke:0.2px #1a1a1a;">Cancel Confirm No</div>
<div class="t" style="left:982.2px;top:794.07px;font-size:10.9px;line-height:10.9px;font-weight:400;color:#1a1a1a;-webkit-text-stroke:0.2px #1a1a1a;">Cancel Confirm Date</div>
<div class="a" style="left:1132px;top:704px;width:743px;height:20px;box-sizing:border-box;border:1px solid #dcdcdc;border-radius:3px;background:#fff"></div>
<svg class="a" style="left:1145px;top:708px" width="12" height="12" viewBox="0 0 12 12"><circle cx="5.5" cy="5.5" r="4.2" fill="none" stroke="#999" stroke-width="1.1"/><path d="M8.5 8.5 L10.5 10.5" stroke="#999" stroke-width="1.1"/></svg>
<div class="t" style="left:1167.5px;top:710.03px;font-size:10px;line-height:10px;font-weight:400;color:#c5c5c5;font-style:italic">Name</div>
<div class="a" style="left:1132px;top:733px;width:743px;height:20px;box-sizing:border-box;border:1px solid #dcdcdc;border-radius:3px;background:#fff"></div>
<div class="t" style="left:1143px;top:739.03px;font-size:10px;line-height:10px;font-weight:400;color:#c5c5c5;font-style:italic">Vendor staff name</div>
<div class="a" style="left:1132px;top:763px;width:743px;height:20px;box-sizing:border-box;border:1px solid #dcdcdc;border-radius:3px;background:#fff"></div>
<div class="t" style="left:1132.6px;top:795.17px;font-size:10.9px;line-height:10.9px;font-weight:400;color:#222;">2025-11-19 19:11:44</div>
<div class="a" style="left:1834px;top:821px;width:49px;height:20px;background:#868d96;border-radius:2px"></div>
<div class="t" style="left:1858.5px;transform:translateX(-50%);top:827.03px;font-size:10px;line-height:10px;font-weight:400;color:#fff;-webkit-text-stroke:0.2px #fff">Save</div>
<svg class="a" style="left:960px;top:238px" width="340" height="64"><rect x="4.35" y="4.35" width="328.9" height="52.7" fill="none" stroke="#e31b1f" stroke-width="4.5"/></svg>
</body></html>
